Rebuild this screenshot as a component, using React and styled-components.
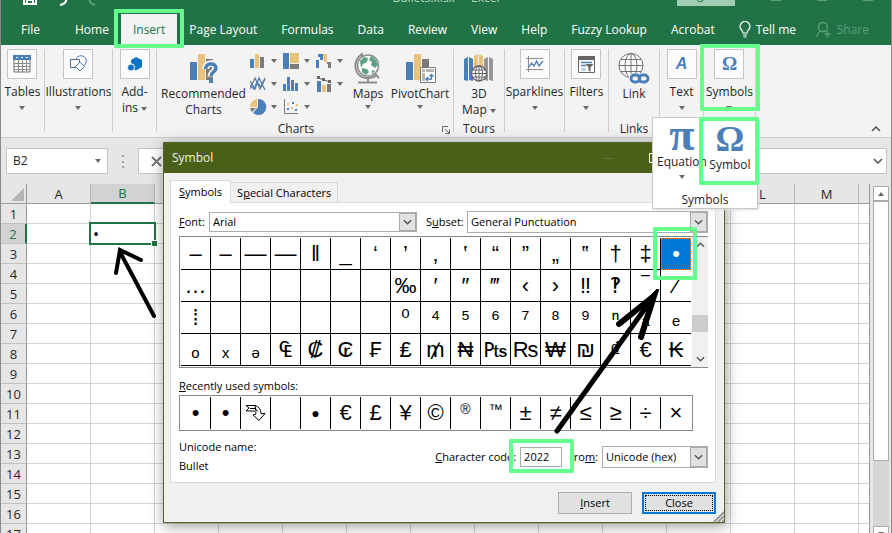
import React, { useState } from "react";
import styled, { createGlobalStyle, css } from "styled-components";

const BLUE = "#4a7fb8";
const SAND = "#e9c27c";
const GREY = "#7a7a7a";

const TABS = ["File", "Home", "Insert", "Page Layout", "Formulas", "Data", "Review", "View", "Help", "Fuzzy Lookup", "Acrobat"];
const COLUMNS = "ABCDEFGHIJKLMN".split("");
const ROWS = Array.from({ length: 17 }, (_, i) => i + 1);

const SYMBOLS = [
    ["–", "–", "—", "—", "‖", "_", "‘", "’", "‚", "‛", "“", "”", "„", "‟", "†", "‡", "•"],
    ["…", "", "", "", "", "", "", "‰", "′", "″", "‴", "‹", "›", "‼", "‽", "‾", "⁄"],
    ["⁞", "", "", "", "", "", "", "⁰", "⁴", "⁵", "⁶", "⁷", "⁸", "⁹", "ⁿ", "ₐ", "ₑ"],
    ["ₒ", "ₓ", "ₔ", "₠", "₡", "₢", "₣", "₤", "₥", "₦", "₧", "₨", "₩", "₪", "₫", "€", "₭"],
];
const RECENT = ["•", "•", "arrow", "", "●", "€", "£", "¥", "©", "®", "™", "±", "≠", "≤", "≥", "÷", "×"];

/* ---------- icons ---------- */

const TableIcon = () => (
    <svg width="18" height="18" viewBox="0 0 18 18">
        <path d="M1 1h16v16H1z" fill="#fff" stroke="#6d6d6d" />
        <path d="M0 0h18v5H0z" fill={BLUE} />
        <path d="M3 2.5h2M8 2.5h2M13 2.5h2" stroke="#fff" />
        <path d="M5.5 5v12M9.5 5v12M13.5 5v12M1 8.5h16M1 11.5h16M1 14.5h16" stroke="#8a8a8a" />
    </svg>
);
const ShapesIcon = () => (
    <svg width="18" height="18" viewBox="0 0 18 18" fill="#fff" stroke={BLUE}>
        <circle cx="12" cy="6" r="5.3" />
        <path d="M1.5 4.5h9v8h-9z" stroke="#4d6b8c" />
        <path d="M11 7l4.5 4.5L11 16l-4.5-4.500z" />
    </svg>
);
const AddinIcon = () => (
    <svg width="16" height="16" viewBox="0 0 16 16" fill="#0f73c7">
        <path d="M9 1l6 3v7l-6 3.500-2-1V9L4 7V4z" />
        <circle cx="4" cy="11.500" r="3.600" stroke="#fcfcfc" />
    </svg>
);
const RecommendedIcon = () => (
    <svg width="30" height="30" viewBox="0 0 30 30">
        <path d="M1 9h7v18H1z" fill={BLUE} />
        <path d="M9 1h7v26H9z" fill={SAND} />
        <path d="M17 6h7v21h-7z" fill={GREY} />
        <path d="M16.500 16c0-7 10.500-7 10.500-1 0 4-5 4-5 8.500" fill="none" stroke="#f3f3f3" strokeWidth="7" />
        <path d="M16.500 16c0-6.500 10.500-6.500 10.500-1 0 4-5 4-5 8" fill="none" stroke={BLUE} strokeWidth="3.500" />
        <path d="M20 26h4v4h-4z" fill={BLUE} />
    </svg>
);
const GlobeIcon = () => (
    <svg width="30" height="32" viewBox="0 0 30 32" fill="none">
        <path d="M9 2C-1 8 0 25 14 26c5 0 9-2 10-4M9 1v4M22 22l4 4" stroke="#8d8d8d" strokeWidth="2" />
        <circle cx="15" cy="13.500" r="10.500" fill="#fff" stroke="#8d8d8d" strokeWidth="1.500" />
        <path d="M7 9l4-4 4 1-1 4-4 2-2 4zM18 4l5 4 2 5-3 3-4-3 1-3-3-2zM9 16l5 1 2 3-3 3-4-3zM19 18l3 1-3 3z" fill="#5da283" />
        <path d="M15 26v4M5 30.500h19" stroke="#8d8d8d" strokeWidth="2" />
    </svg>
);
const PivotIcon = () => (
    <svg width="31" height="30" viewBox="0 0 31 30">
        <path d="M1 9h7v18H1z" fill={BLUE} />
        <path d="M9 1h7v26H9z" fill={SAND} />
        <path d="M17 6h7v8h-7z" fill={GREY} />
        <path d="M15.500 14.500h15v15h-15z" fill="#fff" stroke={GREY} />
        <path d="M17 16h3v3h-3zM21 16h8v3h-8zM17 20h3v8h-3z" fill="#b5b5b5" />
        <path d="M21 26h5.500v-4.500M23 24l-2 2 2 2M24.500 23.500l2-2 2 2" fill="none" stroke={BLUE} strokeWidth="1.400" />
    </svg>
);
const MapIcon = () => (
    <svg width="30" height="30" viewBox="0 0 30 30">
        <path d="M0 6l4-2v24l-4-1zM5 4l4 2v22l-4-1z" fill={BLUE} />
        <path d="M10 3l4-2v16h-4zM15 1l4 2v14h-4z" fill={SAND} />
        <path d="M20 6l4-2v24l-4-1zM25 4l4 2v22l-4-1z" fill="#969696" />
        <circle cx="15" cy="20.500" r="7.500" fill="#fff" stroke="#666" strokeWidth="1.300" />
        <path d="M15 13v15M8 20.500h14M9 17h12M9 24h12" stroke="#666" />
        <ellipse cx="15" cy="20.500" rx="3.500" ry="7.500" fill="none" stroke="#666" />
    </svg>
);
const SparkIcon = () => (
    <svg width="18" height="16" viewBox="0 0 18 16" fill="none">
        <path d="M2.500 0v16M0 2.500h17M0 13.500h17" stroke="#8a8a8a" />
        <path d="M3 11l2.500-4 2.500 3 2.500-5 2.500 5 4-5" stroke={BLUE} strokeWidth="1.300" />
    </svg>
);
const FilterIcon = () => (
    <svg width="17" height="17" viewBox="0 0 17 17">
        <path d="M.5.5h16v16H.5z" fill="#fff" stroke="#666" />
        <path d="M0 0h17v4H0z" fill="#666" />
        <path d="M3 6.500h11M3 9.500h5" stroke={BLUE} strokeWidth="1.500" />
        <path d="M3 13.500h5" stroke="#9ec3e6" strokeWidth="2" />
        <path d="M7.500 8h8l-3 3.500V16l-2-1.500v-3z" fill="#666" />
    </svg>
);
const LinkIcon = () => (
    <svg width="32" height="32" viewBox="0 0 32 32" fill="none">
        <circle cx="13" cy="13.500" r="12" fill="#fff" stroke="#707070" />
        <path d="M13 1.500v24M1 13.500h24M3 7.500h20M3 19.500h20" stroke="#707070" />
        <ellipse cx="13" cy="13.500" rx="6" ry="12" stroke="#707070" />
        <path d="M16 22h10a4 4 0 0 1 0 9h-10a4 4 0 0 1 0-9z" fill="#f3f3f3" stroke="#f3f3f3" strokeWidth="2" />
        <rect x="13" y="23" width="9" height="7" rx="3.500" stroke={BLUE} strokeWidth="2.800" />
        <rect x="21" y="23" width="9" height="7" rx="3.500" stroke={BLUE} strokeWidth="2.800" />
    </svg>
);

const MINI_CHARTS = [
    <>
        <path d="M0 6h4v9H0z" fill={BLUE} />
        <path d="M5 1h4v14H5z" fill={SAND} />
        <path d="M10 4h4v11h-4z" fill={GREY} />
    </>,
    <>
        <path d="M0 0h6v16H0z" fill={BLUE} />
        <path d="M7 0h9v10H7z" fill={SAND} />
        <path d="M7 11h9v5H7z" fill={GREY} />
    </>,
    <>
        <path d="M0 7h3v8H0zM2 1h5v6H4v-3H2z" fill={BLUE} />
        <path d="M7 1h4v8H8z" fill={SAND} />
        <path d="M11 9h4v6h-3v-4h-1z" fill={GREY} />
    </>,
    <g fill="none" strokeWidth="1.300">
        <path d="M0 13L5 2l5 11 5-11" stroke={GREY} />
        <path d="M0 5l5 8 4-11 6 12" stroke={BLUE} />
        <path d="M0 9l4 4 3-7 4 5 4-8" stroke={BLUE} />
    </g>,
    <path d="M0 8h3v7H0zM4 1h3v14H4zM8 4h3v11H8zM12 7h3v8h-3z" fill={BLUE} />,
    <>
        <path d="M1 5h4v11H1z" fill={BLUE} />
        <path d="M6 9h4v7H6z" fill={SAND} />
        <path d="M11 8h4v8h-4z" fill={GREY} />
        <path d="M2 2l6 2 6 2" stroke="#666" fill="none" />
        <path d="M1 0h3v3H1zM6 2h3v3H6zM12 4h3v3h-3z" fill="#666" />
    </>,
    <>
        <path d="M7 8V0a8 8 0 0 0-7 8z" fill={SAND} />
        <path d="M8 8V0a8 8 0 1 1-5 14z" fill={BLUE} />
        <path d="M6 9L2 13a8 8 0 0 1-2-4z" fill={GREY} />
    </>,
    <>
        <path d="M1.500 0v14.500H15" stroke={GREY} fill="none" />
        <path d="M4 9h2v2H4zM9 3h2v2H9zM12 10h2v2h-2z" fill={BLUE} />
        <path d="M4 4h2v2H4zM8 8h2v2H8zM13 5h2v2h-2z" fill={SAND} />
    </>,
];

const Caret = () => (
    <svg width="6" height="4" viewBox="0 0 6 4">
        <path d="M0 0h6L3 4z" fill="#6a6a6a" />
    </svg>
);
const Chevron = ({ up, size = 10 }) => (
    <svg width={size} height="6" viewBox="0 0 10 6" fill="none" stroke="#555" strokeWidth="1.600">
        <path d={up ? "M1 5l4-4 4 4" : "M1 1l4 4 4-4"} />
    </svg>
);

/* ---------- pieces ---------- */

const Combo = ({ id, options, wide, grow, tall }) => (
    <ComboBox $wide={wide} $grow={grow} $tall={tall}>
        <select id={id}>
            {options.map((o) => <option key={o}>{o}</option>)}
        </select>
        <ComboArrow><Chevron size={9} /></ComboArrow>
    </ComboBox>
);

const Collapsed = ({ icon, label, last, width }) => (
    <Group $width={width}>
        <RibbonButton>
            <IconBox>{icon}</IconBox>
            <Label>{label}</Label>
            {last ? <Label>{last} <Caret /></Label> : <CaretLine><Caret /></CaretLine>}
        </RibbonButton>
    </Group>
);

const Ribbon = () => (
    <RibbonBar>
        <Collapsed width={44} icon={<TableIcon />} label="Tables" />
        <Collapsed width={68} icon={<ShapesIcon />} label="Illustrations" />
        <Collapsed width={44} icon={<AddinIcon />} label="Add-" last="ins" />
        <Group $width={297}>
            <GroupItems>
                <RibbonButton $large $width={93}>
                    <RecommendedIcon />
                    <Label>Recommended<br />Charts</Label>
                </RibbonButton>
                <ChartGrid>
                    {MINI_CHARTS.map((shape, i) => (
                        <MiniButton key={i}>
                            <svg width="17" height="16" viewBox="0 0 17 16">{shape}</svg>
                            <Caret />
                        </MiniButton>
                    ))}
                </ChartGrid>
                <RibbonButton $large $width={38}>
                    <GlobeIcon />
                    <Label>Maps</Label>
                    <CaretLine><Caret /></CaretLine>
                </RibbonButton>
                <RibbonButton $large $width={66}>
                    <PivotIcon />
                    <Label>PivotChart</Label>
                    <CaretLine><Caret /></CaretLine>
                </RibbonButton>
            </GroupItems>
            <GroupName $launcher>
                Charts
                <Launcher aria-label="Chart options">
                    <svg width="8" height="8" viewBox="0 0 8 8" fill="none" stroke="#666">
                        <path d="M.5 6V.5H6M3 3l4 4M7.500 3.500v4h-4" />
                    </svg>
                </Launcher>
            </GroupName>
        </Group>
        <Group $width={51}>
            <GroupItems>
                <RibbonButton $large>
                    <MapIcon />
                    <Label>3D<br />Map <Caret /></Label>
                </RibbonButton>
            </GroupItems>
            <GroupName>Tours</GroupName>
        </Group>
        <Collapsed width={60} icon={<SparkIcon />} label="Sparklines" />
        <Collapsed width={44} icon={<FilterIcon />} label="Filters" />
        <Group $width={51}>
            <GroupItems>
                <RibbonButton $large>
                    <LinkIcon />
                    <Label>Link</Label>
                </RibbonButton>
            </GroupItems>
            <GroupName>Links</GroupName>
        </Group>
        <Collapsed width={44} icon={<TextA>A</TextA>} label="Text" />
        <Group $width={52}>
            <RibbonButton>
                <IconBox><Omega>Ω</Omega></IconBox>
                <Label>Symbols</Label>
                <CaretLine><Caret /></CaretLine>
            </RibbonButton>
            <Highlight $inset="-5px -5px 21px -4px" />
            <SymbolsMenu>
                <MenuItems>
                    <MenuButton>
                        <Glyph $size={46} $line={24}>π</Glyph>
                        <Label>Equation</Label>
                        <CaretLine><Caret /></CaretLine>
                    </MenuButton>
                    <MenuButton>
                        <Glyph $size={36} $line={32}>Ω</Glyph>
                        <Label>Symbol</Label>
                        <Highlight $inset="-2px -6px -1px -8px" />
                    </MenuButton>
                </MenuItems>
                <Label>Symbols</Label>
            </SymbolsMenu>
        </Group>
        <Collapse aria-label="Collapse the ribbon"><Chevron up /></Collapse>
    </RibbonBar>
);

const Sheet = () => (
    <SheetArea>
        <Viewport>
            <Grid>
                <thead>
                    <tr>
                        <Corner><svg width="13" height="13" viewBox="0 0 13 13"><path d="M13 0v13H0z" fill="#b5b5b5" /></svg></Corner>
                        {COLUMNS.map((c) => <ColHead key={c} $active={c === "B"}>{c}</ColHead>)}
                    </tr>
                </thead>
                <tbody>
                    {ROWS.map((r) => (
                        <tr key={r}>
                            <RowHead $active={r === 2}>{r}</RowHead>
                            {COLUMNS.map((c) => (
                                <Cell key={c}>
                                    {r === 2 && c === "B" && <><Selection />•</>}
                                </Cell>
                            ))}
                        </tr>
                    ))}
                </tbody>
            </Grid>
            <CellArrow width="46" height="76" viewBox="0 0 46 76">
                <path d="M43 71L9 7M5 28L9 5l21 10" />
            </CellArrow>
        </Viewport>
        <Scroll>
            <ScrollButton aria-label="Scroll up"><Caret /></ScrollButton>
            <ScrollThumb />
            <ScrollButton aria-label="Scroll down"><Caret /></ScrollButton>
        </Scroll>
    </SheetArea>
);

const SymbolDialog = () => {
    const [picked, setPicked] = useState("0-16");
    const [code, setCode] = useState("2022");

    return (
        <Dialog role="dialog" aria-label="Symbol">
            <DialogTitle>
                Symbol
                <svg width="60" height="10" viewBox="0 0 60 10" fill="none">
                    <path d="M0 5.500h10" stroke="#5f7331" />
                    <path d="M45.500.5h9v9h-9z" stroke="#fff" />
                </svg>
            </DialogTitle>
            <DialogBody>
                <DialogTabs>
                    <DialogTab $active><u>S</u>ymbols</DialogTab>
                    <DialogTab>S<u>p</u>ecial Characters</DialogTab>
                </DialogTabs>
                <Panel>
                    <FieldRow>
                        <FieldLabel htmlFor="font" $width={30}><u>F</u>ont:</FieldLabel>
                        <Combo id="font" options={["Arial"]} wide={208} />
                        <FieldLabel htmlFor="subset" $width={50} $right>S<u>u</u>bset:</FieldLabel>
                        <Combo id="subset" options={["General Punctuation"]} grow tall />
                    </FieldRow>
                    <SymbolArea>
                        <SymbolGrid>
                            {SYMBOLS.map((row, y) => row.map((s, x) => {
                                const id = y + "-" + x;
                                return (
                                    <SymbolCell key={id} $picked={picked === id} $lined={x < 16} onClick={() => setPicked(id)}>
                                        {s}
                                        {id === "0-16" && <Highlight $inset="-12px -7px -11px -9px" />}
                                    </SymbolCell>
                                );
                            }))}
                        </SymbolGrid>
                        <SymbolScroll>
                            <Chevron up size={9} />
                            <i />
                            <Chevron size={9} />
                        </SymbolScroll>
                    </SymbolArea>
                    <Caption><u>R</u>ecently used symbols:</Caption>
                    <RecentRow>
                        {RECENT.map((s, i) => (
                            <RecentCell key={i} $small={s === "●"} $raised={s === "®" || s === "™"}>
                                {s === "arrow" ? (
                                    <svg width="21" height="19" viewBox="0 0 21 19" fill="#fff" stroke="#000">
                                        <path d="M1 1.500h9c4 1 6 4 6 8h4l-6 7-6-5.500 3-1c0-2-1-3-3-3H1l3-3z" />
                                        <path d="M5 4.500h5l3 3M10 1.500l1 6" fill="none" />
                                    </svg>
                                ) : s}
                            </RecentCell>
                        ))}
                    </RecentRow>
                    <CodeRow>
                        <CodeName>
                            <div>Unicode name:</div>
                            <div>Bullet</div>
                        </CodeName>
                        <label htmlFor="code"><u>C</u>haracter code:</label>
                        <CodeField>
                            <input id="code" value={code} onChange={(e) => setCode(e.target.value)} />
                            <Highlight $inset="-8px -12px -6px -11px" />
                        </CodeField>
                        <label htmlFor="from">fro<u>m</u>:</label>
                        <Combo id="from" options={["Unicode (hex)"]} wide={106} tall />
                    </CodeRow>
                </Panel>
                <Actions>
                    <ActionButton><u>I</u>nsert</ActionButton>
                    <ActionButton $focused>Close</ActionButton>
                </Actions>
            </DialogBody>
            <Grip width="11" height="11" viewBox="0 0 11 11">
                <path d="M1 11L11 1M5 11l6-6M9 11l2-2" stroke="#999" strokeWidth="2" />
            </Grip>
            <CodeArrow width="112" height="150" viewBox="0 0 112 150">
                <path d="M3 142L95 14" strokeWidth="5" />
                <path d="M65 35L100 7 87 48" strokeWidth="6" />
                <path d="M103 0L86 18l11 5z" fill="#000" strokeWidth="1" />
            </CodeArrow>
        </Dialog>
    );
};

function App() {
    return (
        <Window>
            <GlobalStyle />
            <TitleBar>
                <QuickAccess>
                    <svg width="14" height="13" viewBox="0 0 14 13"><path d="M1 0v12h12V0M4 12V8h6v4" fill="none" stroke="#fff" strokeWidth="2" /></svg>
                    <svg width="14" height="14" viewBox="0 0 14 14"><path d="M3 5h4c6 0 6 6-2 8" fill="none" stroke="#fff" strokeWidth="2" /></svg>
                    <svg width="14" height="14" viewBox="0 0 14 14"><path d="M11 5H7C1 5 1 11 8 13" fill="none" stroke="#5f9b78" strokeWidth="2" /></svg>
                </QuickAccess>
                <span>Bullets.xlsx&nbsp; -&nbsp; Excel</span>
                <WindowTools>
                    <SignIn>Sign in</SignIn>
                    <WindowMark /><WindowMark /><WindowMark />
                </WindowTools>
            </TitleBar>
            <TabBar>
                {TABS.map((t) => (
                    <Tab key={t} $active={t === "Insert"} $first={t === "File"}>
                        {t}
                        {t === "Insert" && <Highlight $inset="-5px -7px -3px -7px" />}
                    </Tab>
                ))}
                <TellMe>
                    <svg width="12" height="17" viewBox="0 0 12 17" fill="none" stroke="#fff" strokeWidth="1.200">
                        <path d="M4 12c0-3-3-3-3-6.500a5 5 0 0 1 10 0C11 9 8 9 8 12zM4 14h4M4.500 16h3" />
                    </svg>
                    Tell me
                </TellMe>
                <Share>
                    <svg width="16" height="17" viewBox="0 0 16 17" fill="none" stroke="#5e9c7a" strokeWidth="1.300">
                        <circle cx="7" cy="6" r="4.500" />
                        <path d="M1 16c0-3 2-5 4-6M9 10l1 1M11.500 10v6M8.500 13h6" />
                    </svg>
                    Share
                </Share>
            </TabBar>
            <Ribbon />
            <FormulaBar>
                <NameBox>
                    <input aria-label="Name box" defaultValue="B2" />
                    <Caret />
                </NameBox>
                <Dots>⋮</Dots>
                <Formula>
                    <svg width="11" height="11" viewBox="0 0 11 11"><path d="M1 1l9 9M10 1l-9 9" stroke="#777" strokeWidth="2" /></svg>
                    <input aria-label="Formula" />
                    <Chevron />
                </Formula>
            </FormulaBar>
            <Sheet />
            <SymbolDialog />
        </Window>
    );
}

/* ---------- styles ---------- */

const GlobalStyle = createGlobalStyle`
* { box-sizing: border-box; }
body { margin: 0; overflow: hidden; }
button, input, select {
    font: inherit;
    color: inherit;
    margin: 0;
    padding: 0;
    border: 0;
    border-radius: 0;
    background: none;
}
svg { flex: none; }
`;

const Window = styled.div`
    position: relative;
    display: flex;
    flex-direction: column;
    height: 100vh;
    overflow: hidden;
    border: solid #8a8a8a;
    border-width: 0 1px;
    background: #e6e6e6;
    color: #262626;
    font-family: "Open Sans", "Noto Sans", sans-serif;
    font-size: 12px;
    line-height: 16px;
`;

const Highlight = styled.span`
    position: absolute;
    inset: ${(p) => p.$inset};
    border: 4px solid #66ff8e;
    border-radius: 1px;
    pointer-events: none;
    z-index: 5;
`;

const TitleBar = styled.header`
    display: grid;
    grid-template-columns: 1fr auto 1fr;
    align-items: end;
    align-content: end;
    height: 14px;
    padding-bottom: 8px;
    overflow: hidden;
    background: #217346;
    color: #b9d6c5;
`;
const QuickAccess = styled.div`
    display: flex;
    gap: 18px;
    padding-left: 22px;
`;
const WindowTools = styled.div`
    display: flex;
    justify-content: flex-end;
    align-items: flex-end;
    gap: 36px;
    padding-right: 18px;
`;
const SignIn = styled.button`
    width: 58px;
    height: 22px;
    background: #a0cdb3;
    color: #217346;
`;
const WindowMark = styled.i`
    width: 10px;
    height: 6px;
    border-top: 1px solid #5e9c7a;
`;

const TabBar = styled.nav`
    display: flex;
    height: 31px;
    background: #217346;
    color: #fff;
`;
const Tab = styled.button`
    position: relative;
    padding: 0 12px;
    white-space: nowrap;
    ${(p) => p.$first && css`margin: 0 11px 0 8px;`}
    ${(p) => p.$active && css`
        background: #f3f3f3;
        color: #217346;
    `}
`;
const TellMe = styled.button`
    display: flex;
    align-items: center;
    gap: 5px;
    margin-left: 12px;
`;
const Share = styled(TellMe)`
    margin-left: auto;
    margin-right: 22px;
    color: #5e9c7a;
`;

const RibbonBar = styled.div`
    display: flex;
    height: 93px;
    padding: 4px 0 5px;
    background: #f3f3f3;
    border-bottom: 1px solid #cfcfcf;
`;
const Group = styled.div`
    position: relative;
    display: flex;
    flex-direction: column;
    flex: none;
    align-items: center;
    width: ${(p) => p.$width}px;
    border-right: 1px solid #cfcfcf;
`;
const GroupItems = styled.div`
    display: flex;
    flex: none;
    justify-content: center;
    width: 100%;
    height: 72px;
`;
const GroupName = styled.div`
    position: relative;
    width: 100%;
    padding-right: ${(p) => (p.$launcher ? 18 : 0)}px;
    text-align: center;
`;
const Launcher = styled.button`
    position: absolute;
    right: 3px;
    top: 5px;
    display: flex;
`;
const RibbonButton = styled.button`
    display: flex;
    flex-direction: column;
    align-items: center;
    gap: ${(p) => (p.$large ? 2 : 5)}px;
    padding-top: ${(p) => (p.$large ? 3 : 0)}px;
    width: ${(p) => (p.$width ? p.$width + "px" : "auto")};
    & > span + span { margin-top: -5px; }
    & > svg { height: 32px; }
`;
const IconBox = styled.div`
    display: flex;
    align-items: center;
    justify-content: center;
    width: 30px;
    height: 30px;
    background: #fcfcfc;
    border: 1px solid #c6c6c6;
`;
const Label = styled.span`
    white-space: nowrap;
    line-height: 16px;
    svg { vertical-align: middle; }
`;
const CaretLine = styled.span`
    display: flex;
    align-items: center;
    height: 16px;
`;
const ChartGrid = styled.div`
    display: grid;
    grid-template-columns: repeat(3, 33px);
    grid-auto-rows: 23px;
`;
const MiniButton = styled.button`
    display: flex;
    align-items: center;
    gap: 4px;
`;
const TextA = styled.b`
    font: italic bold 16px "Liberation Sans", sans-serif;
    color: ${BLUE};
`;
const Omega = styled.b`
    font: bold 19px "Liberation Serif", serif;
    color: ${BLUE};
`;
const Glyph = styled.b`
    height: 34px;
    font: bold ${(p) => p.$size}px/${(p) => p.$line}px "Liberation Serif", serif;
    color: ${BLUE};
`;
const SymbolsMenu = styled.div`
    position: absolute;
    top: 68px;
    left: -52px;
    z-index: 4;
    width: 106px;
    padding: 1px 4px 0;
    text-align: center;
    background: #fff;
    border: 1px solid #c8c8c8;
    box-shadow: 1px 1px 2px #ddd;
`;
const MenuItems = styled.div`
    display: flex;
    height: 65px;
    margin-bottom: 8px;
`;
const MenuButton = styled.button`
    position: relative;
    display: flex;
    flex-direction: column;
    align-items: center;
    flex: 1;
    padding-top: 4px;
`;
const Collapse = styled.button`
    display: flex;
    align-self: flex-end;
    margin: 0 10px 0 auto;
`;

const FormulaBar = styled.div`
    display: flex;
    height: 46px;
    padding: 10px 4px 10px 5px;
    background: #e6e6e6;
`;
const NameBox = styled.div`
    display: flex;
    align-items: center;
    width: 102px;
    padding: 0 6px;
    background: #fff;
    border: 1px solid #c6c6c6;
    input { width: 100%; }
`;
const Dots = styled.span`
    width: 30px;
    text-align: center;
    line-height: 26px;
    font-size: 16px;
    color: #999;
`;
const Formula = styled(NameBox)`
    flex: 1;
    padding: 0 3px 0 12px;
`;

const SheetArea = styled.div`
    display: flex;
    flex: 1;
    min-height: 0;
`;
const Viewport = styled.div`
    position: relative;
    flex: 1;
    overflow: hidden;
    border-right: 1px solid #9a9a9a;
`;
const Grid = styled.table`
    table-layout: fixed;
    width: 922px;
    border-collapse: separate;
    border-spacing: 0;
`;
const headCell = css`
    padding: 0;
    font-size: 13px;
    font-weight: 400;
    text-align: center;
    background: ${(p) => (p.$active ? "#d2d2d2" : "#e6e6e6")};
    color: ${(p) => (p.$active ? "#217346" : "#262626")};
`;
const Corner = styled.th`
    width: 26px;
    height: 20px;
    padding: 0 2px 2px 0;
    text-align: right;
    vertical-align: bottom;
    line-height: 0;
    border: solid #9a9a9a;
    border-width: 0 1px 1px 0;
`;
const ColHead = styled.th`
    ${headCell}
    width: 64px;
    border-right: 1px solid #b5b5b5;
    border-bottom: ${(p) => (p.$active ? "2px solid #217346" : "1px solid #9a9a9a")};
`;
const RowHead = styled.th`
    ${headCell}
    height: 20px;
    border-bottom: 1px solid #c0c0c0;
    border-right: ${(p) => (p.$active ? "2px solid #217346" : "1px solid #9a9a9a")};
`;
const Cell = styled.td`
    position: relative;
    padding: 0 2px;
    font-size: 16px;
    color: #000;
    line-height: 12px;
    background: #fff;
    border: solid #d4d4d4;
    border-width: 0 1px 1px 0;
`;
const Selection = styled.i`
    position: absolute;
    inset: -2px;
    border: 2px solid #217346;
    z-index: 1;
    &::after {
        content: "";
        position: absolute;
        right: -3px;
        bottom: -3px;
        width: 5px;
        height: 5px;
        background: #217346;
        border: solid #fff;
        border-width: 1px 0 0 1px;
    }
`;
const CellArrow = styled.svg`
    position: absolute;
    left: 110px;
    top: 61px;
    z-index: 2;
    fill: none;
    stroke: #000;
    stroke-width: 4;
    stroke-linecap: round;
`;
const Scroll = styled.div`
    display: flex;
    flex-direction: column;
    width: 16px;
    margin: 2px 2px 0 3px;
    background: #d6d6d6;
    button:first-child svg { transform: rotate(180deg); }
`;
const ScrollButton = styled.button`
    display: flex;
    flex: none;
    align-items: center;
    justify-content: center;
    height: 15px;
    background: #fff;
    border: 1px solid #ababab;
    &:last-child { margin: auto 0 -8px; }
`;
const ScrollThumb = styled.div`
    height: 75%;
    background: #fff;
    border: 1px solid #ababab;
`;

const Dialog = styled.section`
    position: absolute;
    top: 142px;
    left: 162px;
    z-index: 3;
    width: 562px;
    color: #000;
    background: #f0f0f0;
    border: 1px solid #4f6823;
    box-shadow: 1px 3px 14px rgba(0, 0, 0, 0.4);
`;
const DialogTitle = styled.div`
    display: flex;
    align-items: center;
    justify-content: space-between;
    height: 30px;
    padding: 0 60px 0 8px;
    background: #4a5f17;
    color: #f0f0f0;
`;
const DialogBody = styled.div`
    padding: 7px 8px 8px 6px;
    font-size: 11px;
`;
const DialogTabs = styled.div`
    display: flex;
    align-items: flex-end;
    height: 22px;
`;
const DialogTab = styled.button`
    position: relative;
    height: ${(p) => (p.$active ? 23 : 20)}px;
    background: ${(p) => (p.$active ? "#fff" : "#f0f0f0")};
    border: 1px solid #d9d9d9;
    border-bottom: 0;
    ${(p) => (p.$active ? css`margin-bottom: -1px; padding: 0 8px; z-index: 1;` : css`border-left: 0; padding: 0 6px;`)}
`;
const Panel = styled.div`
    padding: 8px 7px 8px 8px;
    background: #fff;
    border: 1px solid #d9d9d9;
`;
const FieldRow = styled.div`
    display: flex;
    align-items: center;
    height: 22px;
    margin-bottom: 3px;
`;
const FieldLabel = styled.label`
    width: ${(p) => p.$width}px;
    white-space: nowrap;
    ${(p) => p.$right && css`padding-left: 9px;`}
`;
const ComboBox = styled.div`
    display: flex;
    flex: ${(p) => (p.$grow ? 1 : "none")};
    width: ${(p) => p.$wide}px;
    height: ${(p) => (p.$tall ? 22 : 20)}px;
    background: #fff;
    border: 1px solid #ababab;
    select {
        flex: 1;
        min-width: 0;
        padding-left: 3px;
        appearance: none;
        outline: 0;
    }
`;
const ComboArrow = styled.span`
    display: flex;
    align-items: center;
    justify-content: center;
    width: 17px;
    background: #e1e1e1;
    border: 1px solid #ababab;
    pointer-events: none;
`;
const SymbolArea = styled.div`
    display: flex;
    border: solid #828790;
    border-width: 1px 0 1px 1px;
`;
const SymbolGrid = styled.div`
    display: grid;
    grid-template-columns: repeat(17, 30px);
    grid-auto-rows: 32px;
    padding: 1px;
`;
const SymbolCell = styled.button`
    position: relative;
    overflow: visible;
    font: 22px/30px "Liberation Sans", "DejaVu Sans", sans-serif;
    border-bottom: 1px solid #000;
    ${(p) => p.$lined && css`border-right: 1px solid #000;`}
    ${(p) => p.$picked && css`
        background: #0078d7;
        color: #fff;
        border: 1px dotted #ff8728;
    `}
`;
const SymbolScroll = styled.div`
    display: flex;
    flex: 1;
    flex-direction: column;
    align-items: center;
    justify-content: space-between;
    padding: 5px 0;
    background: #f0f0f0;
    i {
        align-self: stretch;
        height: 17px;
        margin-top: 42px;
        background: #cdcdcd;
    }
`;
const Caption = styled.div`
    margin: 10px 0 1px;
`;
const RecentRow = styled.div`
    display: grid;
    grid-template-columns: repeat(17, 30px);
    width: 514px;
    padding: 1px;
    border: 1px solid #828790;
`;
const RecentCell = styled.button`
    display: flex;
    align-items: center;
    justify-content: center;
    height: 32px;
    padding-bottom: ${(p) => (p.$raised ? 8 : 0)}px;
    font: ${(p) => (p.$small || p.$raised ? 14 : 22)}px "Liberation Sans", "DejaVu Sans", sans-serif;
    &:not(:last-child) { border-right: 1px solid #000; }
`;
const CodeRow = styled.div`
    display: flex;
    align-items: center;
    gap: 4px;
    margin-top: 8px;
`;
const CodeName = styled.div`
    display: grid;
    flex: 1;
    gap: 3px;
`;
const CodeField = styled.div`
    position: relative;
    margin-right: 4px;
    input {
        display: block;
        width: 42px;
        height: 20px;
        padding: 0 3px;
        border: 1px solid #ababab;
    }
`;
const Actions = styled.div`
    display: flex;
    justify-content: flex-end;
    gap: 10px;
    margin-top: 9px;
`;
const ActionButton = styled.button`
    width: 74px;
    height: 22px;
    background: #e1e1e1;
    border: 1px solid #adadad;
    ${(p) => p.$focused && css`
        border: 2px solid #0078d7;
        outline: 1px dotted #000;
        outline-offset: -4px;
    `}
`;
const Grip = styled.svg`
    position: absolute;
    right: 0;
    bottom: 0;
`;
const CodeArrow = styled.svg`
    position: absolute;
    left: 390px;
    top: 146px;
    z-index: 6;
    fill: none;
    stroke: #000;
    stroke-linecap: round;
    pointer-events: none;
`;

export default App;
